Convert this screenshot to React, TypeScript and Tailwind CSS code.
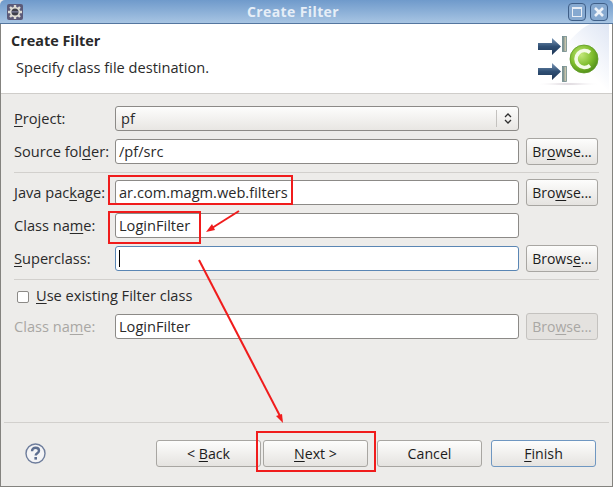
import React from "react";

const font = "font-['Open_Sans','Noto_Sans',sans-serif]";

function U({ children }: { children: React.ReactNode }) {
  return <span className="underline underline-offset-2">{children}</span>;
}

function Browse({ disabled, children }: { disabled?: boolean; children: React.ReactNode }) {
  return (
    <div
      className={`flex h-[27px] w-[72px] shrink-0 items-center justify-center rounded-[3px] border text-[14px] ${
        disabled
          ? "border-[#c4c2bf] bg-[#e4e2df] text-[#a9a7a4]"
          : "border-[#a8a6a2] bg-gradient-to-b from-[#fdfdfc] to-[#e5e3e0] text-[#1c1c1c]"
      }`}
    >
      {children}
    </div>
  );
}

function Input({ value, focus, cursor }: { value?: string; focus?: boolean; cursor?: boolean }) {
  return (
    <div
      className={`flex h-[25px] w-[404px] shrink-0 items-center rounded-[3px] border bg-white pl-[3px] text-[14.6px] text-[#2a2a2a] ${
        focus ? "border-[#5a86b4]" : "border-[#8c8a87]"
      }`}
    >
      {value}
      {cursor && <span className="h-[17px] w-px bg-black" />}
    </div>
  );
}

function Row({
  label,
  value,
  browse,
  focus,
  cursor,
  muted,
  disabledBrowse,
  className = "",
}: {
  label: React.ReactNode;
  value?: string;
  browse?: React.ReactNode;
  focus?: boolean;
  cursor?: boolean;
  muted?: boolean;
  disabledBrowse?: boolean;
  className?: string;
}) {
  return (
    <div className={`flex h-[25px] items-center ${className}`}>
      <div className={`w-[101px] shrink-0 whitespace-nowrap text-[14.6px] ${muted ? "text-[#a9a7a4]" : "text-[#2a2a2a]"}`}>
        {label}
      </div>
      <Input value={value} focus={focus} cursor={cursor} />
      {browse && (
        <div className="ml-[7px]">
          <Browse disabled={disabledBrowse}>{browse}</Browse>
        </div>
      )}
    </div>
  );
}

function Sep({ className = "" }: { className?: string }) {
  return <div className={`h-px bg-[#d2d0cd] ${className}`} />;
}

function BottomButton({ children, primary, className = "" }: { children: React.ReactNode; primary?: boolean; className?: string }) {
  return (
    <div
      className={`flex h-[27px] items-center justify-center rounded-[3px] border bg-gradient-to-b from-[#fdfdfc] to-[#e5e3e0] text-[14.2px] text-[#1c1c1c] ${
        primary ? "border-[#6f97c1]" : "border-[#a8a6a2]"
      } ${className}`}
    >
      {children}
    </div>
  );
}

function GearIcon() {
  return (
    <svg width="16" height="16" viewBox="0 0 16 16">
      <rect x="0" y="0" width="16" height="16" rx="2" fill="#5b5a78" />
      <g stroke="#dedcd4" strokeWidth="2.4" strokeLinecap="butt">
        <path d="M8 1v14M1 8h14M3 3l10 10M13 3L3 13" />
      </g>
      <circle cx="8" cy="8" r="5.2" fill="#dedcd4" />
      <circle cx="8" cy="8" r="3.5" fill="#3f3f48" />
      <rect x="4.5" y="7.4" width="7" height="1" fill="#8b8fb5" />
    </svg>
  );
}

function WindowButtons() {
  return (
    <div className="flex items-center gap-[4px]">
      <div className="flex h-[18px] w-[18px] items-center justify-center rounded-[4px] border border-[#3f5f88] bg-[#86a9d0]">
        <div className="h-[10px] w-[10px] border border-[#e8eef6] border-t-2" />
      </div>
      <div className="flex h-[18px] w-[18px] items-center justify-center rounded-[4px] border border-[#3f5f88] bg-[#86a9d0]">
        <svg width="12" height="12" viewBox="0 0 12 12">
          <path d="M2 2l8 8M10 2l-8 8" stroke="#eef3f9" strokeWidth="2.6" />
        </svg>
      </div>
    </div>
  );
}

function Banner() {
  return (
    <svg width="79" height="69" viewBox="0 0 79 69">
      <defs>
        <linearGradient id="bg" x1="0" y1="1" x2="1" y2="0">
          <stop offset="0.5" stopColor="#ffffff" />
          <stop offset="1" stopColor="#dfe6f4" />
        </linearGradient>
        <linearGradient id="arrow" x1="0" y1="0" x2="0" y2="1">
          <stop offset="0" stopColor="#7d99b8" />
          <stop offset="0.5" stopColor="#2f4f74" />
          <stop offset="1" stopColor="#1e3554" />
        </linearGradient>
        <radialGradient id="ball" cx="0.4" cy="0.35" r="0.7">
          <stop offset="0" stopColor="#c3e87a" />
          <stop offset="0.6" stopColor="#7cbb2a" />
          <stop offset="1" stopColor="#4d8a18" />
        </radialGradient>
        <linearGradient id="bar" x1="0" y1="0" x2="1" y2="0">
          <stop offset="0" stopColor="#5f7d86" />
          <stop offset="1" stopColor="#e9dcb8" />
        </linearGradient>
        <radialGradient id="shadow">
          <stop offset="0" stopColor="#c8bfc8" />
          <stop offset="1" stopColor="#ffffff" stopOpacity="0" />
        </radialGradient>
      </defs>
      <path d="M79 0H60C40 10 22 38 10 69H79z" fill="url(#bg)" />
      <ellipse cx="38" cy="60" rx="32" ry="1.8" fill="url(#shadow)" />
      <rect x="32.5" y="12.5" width="4" height="15" fill="url(#bar)" stroke="#6f8a8c" strokeWidth="0.8" />
      <rect x="32.5" y="42.5" width="4" height="15" fill="url(#bar)" stroke="#6f8a8c" strokeWidth="0.8" />
      <path d="M8 19h14v-5l9 8.5-9 8.5v-5H8z" fill="url(#arrow)" />
      <path d="M8 44h14v-5l9 8.5-9 8.5v-5H8z" fill="url(#arrow)" />
      <circle cx="54" cy="35" r="14" fill="url(#ball)" stroke="#5f9a25" strokeWidth="0.8" />
      <path d="M60 28.5a8.5 8.5 0 1 0 0 13" fill="none" stroke="#f4fbe6" strokeWidth="3.6" />
    </svg>
  );
}

function HelpIcon() {
  return (
    <svg width="21" height="21" viewBox="0 0 21 21">
      <circle cx="10.5" cy="10.5" r="9.5" fill="#f4f4f6" stroke="#6e7d9c" strokeWidth="1.4" />
      <path d="M7 8.2c0-2 1.6-3.4 3.6-3.4s3.4 1.2 3.4 2.9c0 2.5-3.3 2.5-3.3 4.7" fill="none" stroke="#5d6e90" strokeWidth="2.4" />
      <rect x="9.4" y="14" width="2.6" height="2.6" fill="#5d6e90" />
    </svg>
  );
}

function Annotations() {
  return (
    <>
      <div className="absolute left-[108px] top-[175px] h-[30px] w-[185px] border-2 border-[#f01c1c]" />
      <div className="absolute left-[108px] top-[211px] h-[33px] w-[93px] border-2 border-[#f01c1c]" />
      <div className="absolute left-[256px] top-[431px] h-[41px] w-[120px] border-2 border-[#f01c1c]" />
      <svg className="absolute left-0 top-0" width="613" height="487" viewBox="0 0 613 487">
        <path d="M239 211L212 228" stroke="#f01c1c" strokeWidth="2" />
        <path d="M206 232l6-8 3 6z" fill="#f01c1c" />
        <path d="M199 260L280 416" stroke="#f01c1c" strokeWidth="2" />
        <path d="M283 423l-7-7 6-2z" fill="#f01c1c" />
      </svg>
    </>
  );
}

export default function App() {
  return (
    <div className={`relative flex h-[487px] w-[613px] flex-col overflow-hidden bg-[#edecea] ${font}`}>
      <div className="flex h-[24px] shrink-0 items-center justify-between rounded-t-[5px] border-b border-[#54769f] bg-gradient-to-b from-[#6f9acb] to-[#a8c5e3] pl-[7px] pr-[5px]">
        <GearIcon />
        <div className="mr-[5px] text-[14px] font-bold tracking-[0.4px] text-[#e6eef7]">Create Filter</div>
        <WindowButtons />
      </div>
      <div className="flex min-h-0 flex-1 flex-col border-x border-b border-[#84837f] border-x-[#84837f]">
        <div className="flex h-[70px] shrink-0 justify-between border-b border-[#cfcdca] bg-white">
          <div className="pl-[10px] pt-[7px] text-[#2a2a2a]">
            <div className="text-[14.4px] font-bold leading-[20px]">Create Filter</div>
            <div className="mt-[6px] pl-[5px] text-[14.6px] leading-[20px]">Specify class file destination.</div>
          </div>
          <div className="mr-[3px]">
            <Banner />
          </div>
        </div>
        <div className="flex flex-1 flex-col pl-[13px] pr-[13px] pt-[12px]">
          <div className="flex h-[25px] items-center">
            <div className="w-[101px] shrink-0 text-[14.6px] text-[#2a2a2a]">
              <U>P</U>roject:
            </div>
            <div className="flex h-[25px] w-[404px] items-center justify-between rounded-[3px] border border-[#8c8a87] bg-gradient-to-b from-[#fdfdfc] to-[#e8e6e3] pl-[5px] text-[14.6px] text-[#2a2a2a]">
              pf
              <div className="flex h-[17px] w-[22px] items-center justify-center border-l border-[#c4c2bf]">
                <svg width="8" height="13" viewBox="0 0 8 13">
                  <path d="M1 5l3-3 3 3M1 8l3 3 3-3" fill="none" stroke="#2f2f2f" strokeWidth="1.3" />
                </svg>
              </div>
            </div>
          </div>
          <Row className="mt-[8px]" label={<>Source fol<U>d</U>er:</>} value="/pf/src" browse={<>Br<U>o</U>wse...</>} />
          <Sep className="mt-[8px]" />
          <Row className="mt-[7px]" label={<>Java pac<U>k</U>age:</>} value="ar.com.magm.web.filters" browse={<>Bro<U>w</U>se...</>} />
          <Row className="mt-[8px]" label={<>Class na<U>m</U>e:</>} value="LoginFilter" />
          <Row className="mt-[8px]" label={<><U>S</U>uperclass:</>} focus cursor browse={<>Brows<U>e</U>...</>} />
          <Sep className="mt-[8px]" />
          <div className="ml-[3px] mt-[11px] flex h-[12px] items-center">
            <div className="h-[12px] w-[12px] rounded-[2px] border border-[#8c8a87] bg-white" />
            <div className="ml-[7px] -mt-[3px] text-[14.6px] text-[#2a2a2a]">
              <U>U</U>se existing Filter class
            </div>
          </div>
          <Row className="mt-[11px]" muted label={<>Class na<U>m</U>e:</>} value="LoginFilter" disabledBrowse browse={<>Bro<U>w</U>se...</>} />
        </div>
        <Sep className="mx-[3px] mb-[17px]" />
        <div className="flex h-[27px] shrink-0 items-center pl-[24px]">
          <HelpIcon />
          <BottomButton className="ml-[110px] w-[105px]"><span>&lt; <U>B</U>ack</span></BottomButton>
          <BottomButton className="ml-[2px] w-[105px]"><span><U>N</U>ext &gt;</span></BottomButton>
          <BottomButton className="ml-[9px] w-[105px]">Cancel</BottomButton>
          <BottomButton primary className="ml-[9px] w-[105px]"><span><U>F</U>inish</span></BottomButton>
        </div>
        <div className="h-[19px] shrink-0" />
      </div>
      <Annotations />
    </div>
  );
}
